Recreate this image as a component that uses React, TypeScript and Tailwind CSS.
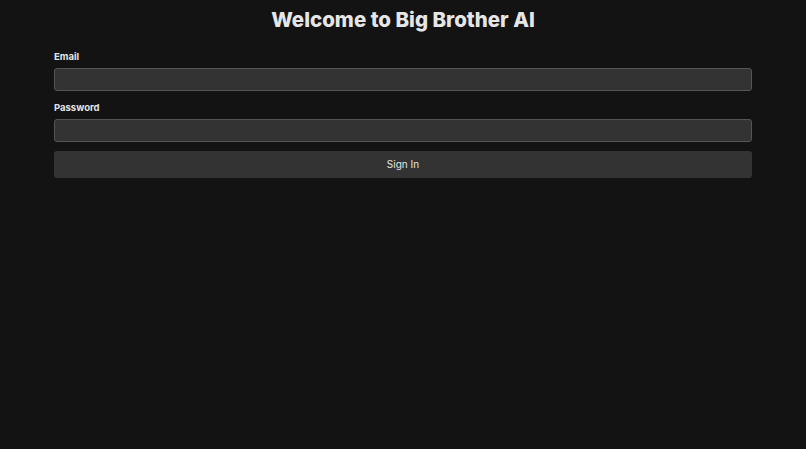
const Field = ({ label, type }: { label: string; type: string }) => (
    <div className="flex flex-col">
        <label className="mb-[5px] text-[9.5px] font-bold leading-[12px] text-[#e4e4e4]">
            {label}
        </label>
        <input
            type={type}
            className="h-[23px] w-full rounded-[3px] border border-[#545454] bg-[#333333] px-2 text-[10px] text-[#e4e4e4] outline-none"
        />
    </div>
);

const App = () => {
    return (
        <div
            className="min-h-[449px] bg-[#131313] px-[54px] pt-2"
            style={{ fontFamily: 'Inter, "Liberation Sans", sans-serif' }}
        >
            <h1 className="text-center text-[20.5px] font-extrabold leading-6 text-[#e6e6e6]">
                Welcome to Big Brother AI
            </h1>
            <form className="mt-[19px] flex flex-col">
                <Field label="Email" type="email" />
                <div className="mt-[11px]">
                    <Field label="Password" type="password" />
                </div>
                <button
                    type="button"
                    className="mt-[9px] h-[27px] w-full rounded-[3px] bg-[#333333] text-[10px] text-[#e4e4e4]"
                >
                    Sign In
                </button>
            </form>
        </div>
    );
};

export default App;
